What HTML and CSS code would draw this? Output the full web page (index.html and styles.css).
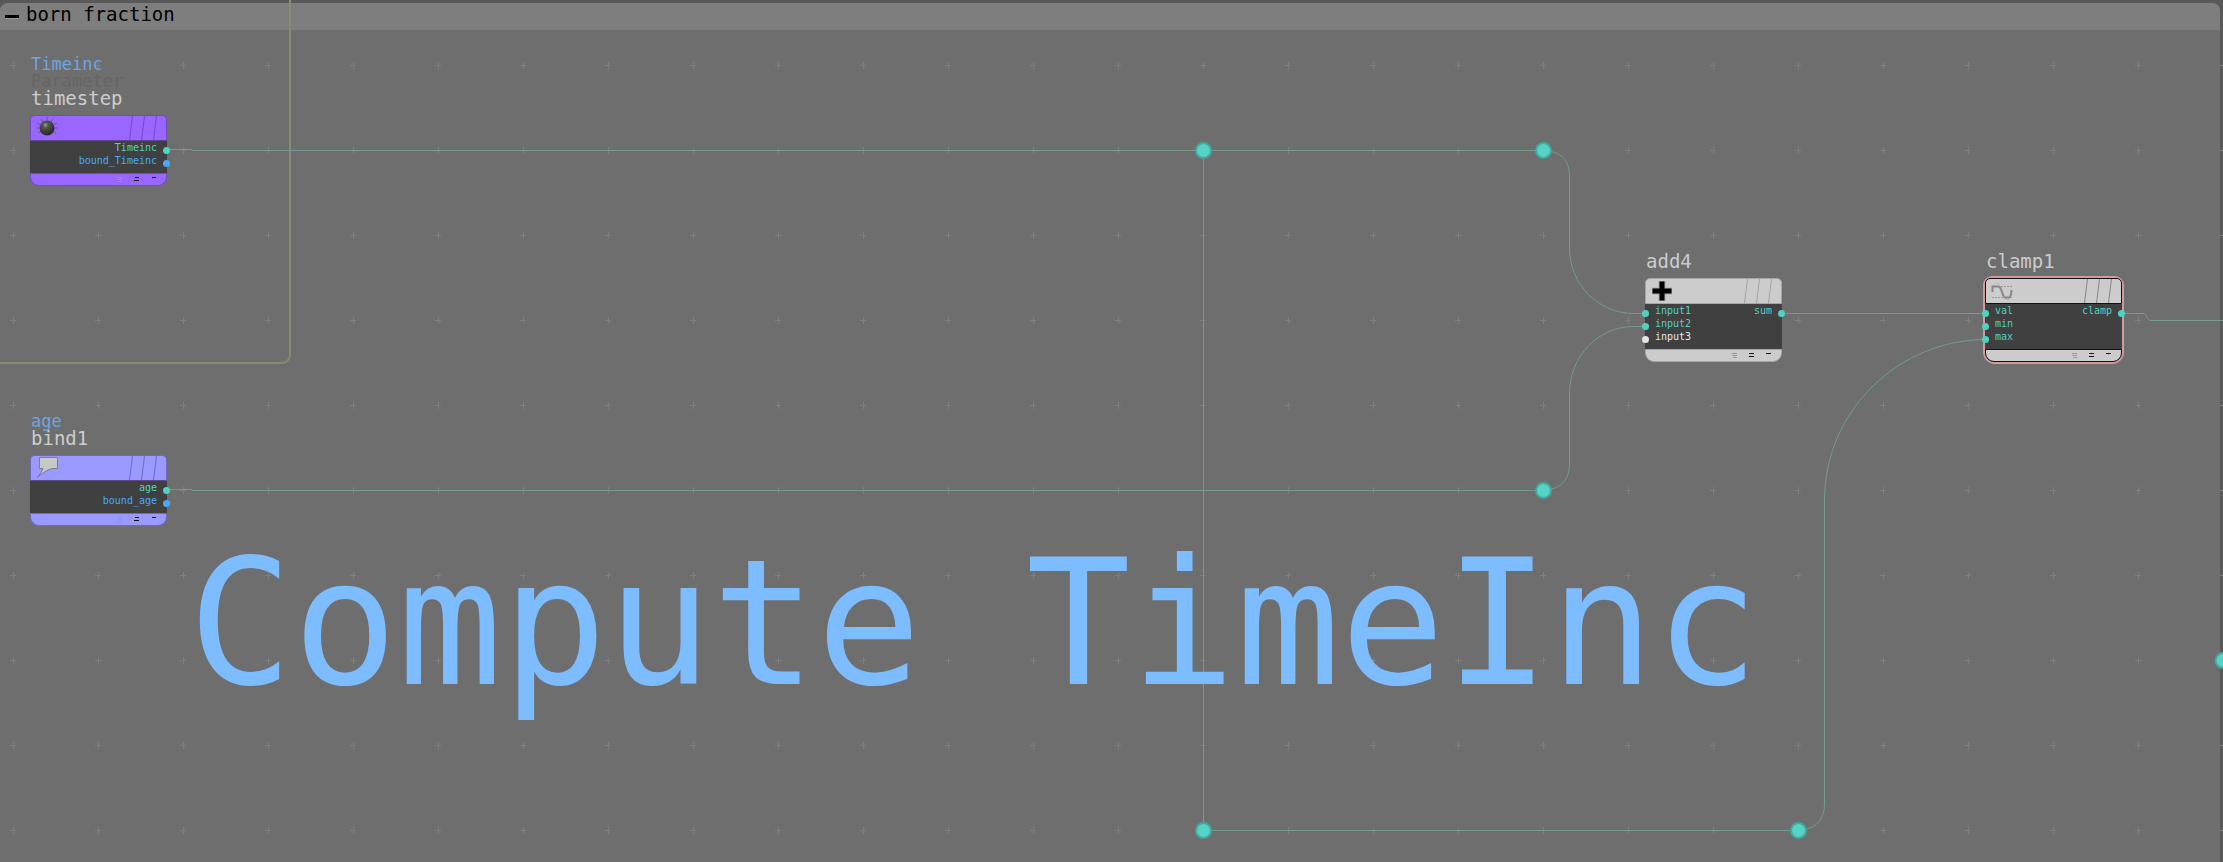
FILE: index.html
```html
<!DOCTYPE html>
<html lang="en">
<head>
  <meta charset="UTF-8" />
  <meta name="viewport" content="width=device-width, initial-scale=1.0" />
  <title>born fraction</title>
  <link rel="stylesheet" href="styles.css">
</head>
<body>

  <main class="network">
    <section class="box">
      <header class="box-title">
        <button class="collapse" aria-label="Collapse"></button>
        <span>born fraction</span>
      </header>
    </section>

    <svg class="wires" aria-hidden="true">
      <defs>
        <pattern id="grid" x="-29" y="23" width="85" height="85" patternUnits="userSpaceOnUse">
          <path d="M39 42.5h6M42.5 39v7" stroke="#7f7f7f" />
        </pattern>
      </defs>
      <rect y="32" width="100%" height="100%" fill="url(#grid)" />
      <path class="outer-box" d="M-5 363H282a8 8 0 0 0 8-8V-5" />

      <path d="M167 149.5H192V150.5H1544Q1569.5 152 1569.5 176V248C1569.5 284 1598 313.5 1634 313.5H1646" />
      <path d="M167 489.5H192V490.5H1544Q1569.5 488 1569.5 464V394C1569.5 356 1598 326.5 1634 326.5H1646" />
      <path d="M1203.5 150V830.5H1799Q1824.5 828 1824.5 804V500C1824.5 410 1900 339.5 1986 339.5" />
      <path d="M1781 313.5H1986" />
      <path d="M2121 313.5H2143C2149 313.5 2145 320.5 2151 320.5H2223" />

      <g class="dots">
        <circle cx="1203.5" cy="150.5" r="7.5" />
        <circle cx="1543.5" cy="150.5" r="7.5" />
        <circle cx="1543.5" cy="490.5" r="7.5" />
        <circle cx="1203.5" cy="830.5" r="7.5" />
        <circle cx="1798.5" cy="830.5" r="7.5" />
        <circle cx="2223" cy="660.5" r="7.5" />
      </g>
    </svg>

    <h1 class="note">Compute TimeInc</h1>

    <article class="node parameter" id="timestep">
      <div class="labels">
        <span class="sub">Timeinc</span>
        <span class="sub type">Parameter</span>
        <span class="name">timestep</span>
      </div>
      <div class="head">
        <svg class="icon" viewBox="0 0 22 22">
          <defs>
            <radialGradient id="knob" cx="0.4" cy="0.3" r="0.7">
              <stop offset="0" stop-color="#a0a39c" />
              <stop offset="0.25" stop-color="#555753" />
              <stop offset="1" stop-color="#262724" />
            </radialGradient>
          </defs>
          <path d="M11 1v3M5 3l2 3M17 3l-2 3M1 7l3 1.5M21 7l-3 1.5M0.5 12h3M18.5 12h3M2 17l3-1.5M20 17l-3-1.5" stroke="#6e51a5" />
          <circle cx="11" cy="12" r="7.5" fill="url(#knob)" />
        </svg>
        <svg class="flags" viewBox="0 0 32 24"><path d="M4.5 0l-3 24M16.5 0l-3 24M28.5 0l-3 24" /></svg>
      </div>
      <div class="body">
        <ul class="ports outputs">
          <li class="teal">Timeinc<i></i></li>
          <li class="blue">bound_Timeinc<i></i></li>
        </ul>
      </div>
      <div class="foot">
        <svg viewBox="0 0 42 8"><path class="dim" d="M1 1.5h5M1 3.5h5M2 5.5h4" /><path d="M19 1.5h4M18 4.5h5M36 1.5h4" /></svg>
      </div>
    </article>

    <article class="node bind" id="bind1">
      <div class="labels">
        <span class="sub">age</span>
        <span class="name">bind1</span>
      </div>
      <div class="head">
        <svg class="icon" viewBox="0 0 22 22">
          <path d="M3.5 1.5h18v11h-6q-7 2.5-14.5 9q5-5 6-9h-3.5z" fill="#c5c8c4" stroke="#7d7d8c" />
        </svg>
        <svg class="flags" viewBox="0 0 32 24"><path d="M4.5 0l-3 24M16.5 0l-3 24M28.5 0l-3 24" /></svg>
      </div>
      <div class="body">
        <ul class="ports outputs">
          <li class="teal">age<i></i></li>
          <li class="blue">bound_age<i></i></li>
        </ul>
      </div>
      <div class="foot">
        <svg viewBox="0 0 42 8"><path class="dim" d="M3 1.5h3M3 3.5h3M1 5.5h5" /><path d="M19 1.5h4M18 4.5h5M36 1.5h4" /></svg>
      </div>
    </article>

    <article class="node" id="add4">
      <div class="labels"><span class="name">add4</span></div>
      <div class="head">
        <svg class="icon" viewBox="0 0 22 22">
          <path d="M11 2v20M1 12h20" stroke="#aaa" stroke-width="7" />
          <path d="M11 2.5v19M1.5 12h19" stroke="#000" stroke-width="5" />
        </svg>
        <svg class="flags" viewBox="0 0 32 24"><path d="M4.5 0l-3 24M16.5 0l-3 24M28.5 0l-3 24" /></svg>
      </div>
      <div class="body">
        <ul class="ports inputs">
          <li class="teal"><i></i>input1</li>
          <li class="teal"><i></i>input2</li>
          <li class="white"><i></i>input3</li>
        </ul>
        <ul class="ports outputs">
          <li class="teal">sum<i></i></li>
        </ul>
      </div>
      <div class="foot">
        <svg viewBox="0 0 42 8"><path class="dim" d="M1 1.5h5M1 3.5h5M2 5.5h4" /><path d="M18 1.5h5M18 4.5h5M35 1.5h5" /></svg>
      </div>
    </article>

    <article class="node selected" id="clamp1">
      <div class="labels"><span class="name">clamp1</span></div>
      <div class="head">
        <svg class="icon" viewBox="0 0 22 22" fill="none">
          <path d="M1 7.5h20M1 18.5h20" stroke="#999" stroke-dasharray="2 1" />
          <path d="M1 12C3 1 8 1 11 12S19 24 21 12" stroke="#b8b8b8" />
          <path d="M1.500 13V7.5H7.5Q9.5 8 11 13T14 18.5H18.5Q20.5 16 20.5 11" stroke="#888" stroke-width="2" />
        </svg>
        <svg class="flags" viewBox="0 0 32 24"><path d="M4.5 0l-3 24M16.5 0l-3 24M28.5 0l-3 24" /></svg>
      </div>
      <div class="body">
        <ul class="ports inputs">
          <li class="teal"><i></i>val</li>
          <li class="teal"><i></i>min</li>
          <li class="teal"><i></i>max</li>
        </ul>
        <ul class="ports outputs">
          <li class="teal">clamp<i></i></li>
        </ul>
      </div>
      <div class="foot">
        <svg viewBox="0 0 42 8"><path class="dim" d="M1 1.5h5M1 3.5h5M2 5.5h4" /><path d="M18 1.5h5M18 4.5h5M35 1.5h5" /></svg>
      </div>
    </article>
  </main>

</body>
</html>
```
FILE: styles.css
```css
* {
  box-sizing: border-box;
}

body {
  margin: 0;
  background: #595959;
  font-family: "DejaVu Sans Mono", "Liberation Mono", monospace;
}

.network {
  position: relative;
  display: flex;
  min-height: 100vh;
  padding: 3px 3px 0 0;
  overflow: hidden;
}

.box {
  flex: 1;
  background: #6e6e6e;
  border-radius: 8px 8px 0 0;
}

.box-title {
  display: flex;
  align-items: center;
  gap: 7px;
  height: 27px;
  padding: 0 5px;
  background: #7e7e7e;
  border-radius: 8px 8px 0 0;
  color: #000;
  font-size: 19px;
  line-height: 23px;
}

.box-title span {
  align-self: flex-start;
}

.collapse {
  width: 14px;
  height: 4px;
  padding: 0;
  border: 0;
  border-bottom: 1px solid #999;
  background: #000;
  cursor: pointer;
}

.wires {
  position: absolute;
  top: 0;
  left: 0;
  width: 100%;
  height: 100%;
  fill: none;
  stroke: #729b93;
}

.wires rect {
  stroke: none;
}

.wires .outer-box {
  stroke: #8a8a70;
  stroke-width: 2;
}

.dots circle {
  fill: #55d3c5;
  stroke: #45a89e;
  stroke-width: 2;
}

.note {
  position: absolute;
  top: 536px;
  left: 188px;
  margin: 0;
  color: #7dbdff;
  font-size: 174px;
  font-weight: normal;
  line-height: 176px;
  white-space: nowrap;
}

/* Nodes */
.node {
  --tile: #cccccc;
  --edge: #a5a5a5;
  position: absolute;
  width: 137px;
}

.parameter {
  --tile: #9966ff;
  --edge: #7449c8;
}

.bind {
  --tile: #9999ff;
  --edge: #6c6cbe;
}

#timestep {
  top: 115px;
  left: 30px;
}

#bind1 {
  top: 455px;
  left: 30px;
}

#add4 {
  top: 278px;
  left: 1645px;
}

#clamp1 {
  top: 278px;
  left: 1985px;
}

.labels {
  position: absolute;
  bottom: 100%;
  left: 1px;
  display: flex;
  flex-direction: column;
  padding-bottom: 8px;
  line-height: 17px;
  white-space: nowrap;
}

.name {
  color: #cccccc;
  font-size: 19px;
}

.sub {
  color: #6ea5e0;
  font-size: 17px;
}

.type {
  color: #656565;
}

.head {
  display: flex;
  justify-content: space-between;
  height: 26px;
  padding: 0 6px 0 5px;
  background: var(--tile);
  border: 1px solid var(--edge);
  border-radius: 5px 5px 0 0;
}

.icon {
  width: 22px;
  height: 22px;
}

.flags {
  width: 32px;
  height: 24px;
  stroke: var(--edge);
}

.body {
  display: flex;
  justify-content: space-between;
  padding: 3px 0;
  background: #404040;
}

.bind .head,
.parameter .head {
  border-bottom-color: #5a4a86;
}

.ports {
  margin: 0;
  padding: 0;
  list-style: none;
  font-size: 10px;
  line-height: 8px;
}

.outputs {
  margin-left: auto;
}

.ports li {
  display: flex;
  gap: 6px;
  height: 13px;
}

.outputs li {
  justify-content: flex-end;
}

.ports i {
  width: 7px;
  height: 7px;
  margin-top: 3px;
  border-radius: 50%;
  background: currentColor;
}

.inputs i {
  margin-left: -3px;
}

.outputs i {
  margin-right: -3px;
}

.teal {
  color: #50d2c2;
}

.blue {
  color: #46aaff;
}

.white {
  color: #e4e4e4;
}

.foot {
  display: flex;
  justify-content: flex-end;
  height: 13px;
  padding: 2px 8px 0 0;
  background: var(--tile);
  border: 1px solid var(--edge);
  border-radius: 0 0 9px 9px;
}

.foot svg {
  width: 42px;
  height: 8px;
  stroke: #111;
}

.foot .dim {
  stroke: #999;
}

/* Picked node gets a black rim and a pink outline */
.selected {
  border-radius: 7px 7px 10px 10px;
  box-shadow: 0 0 0 2px #d29a9a;
}

.selected .head,
.selected .foot {
  border-color: #111;
}

.selected .flags {
  stroke: #888;
}
```
